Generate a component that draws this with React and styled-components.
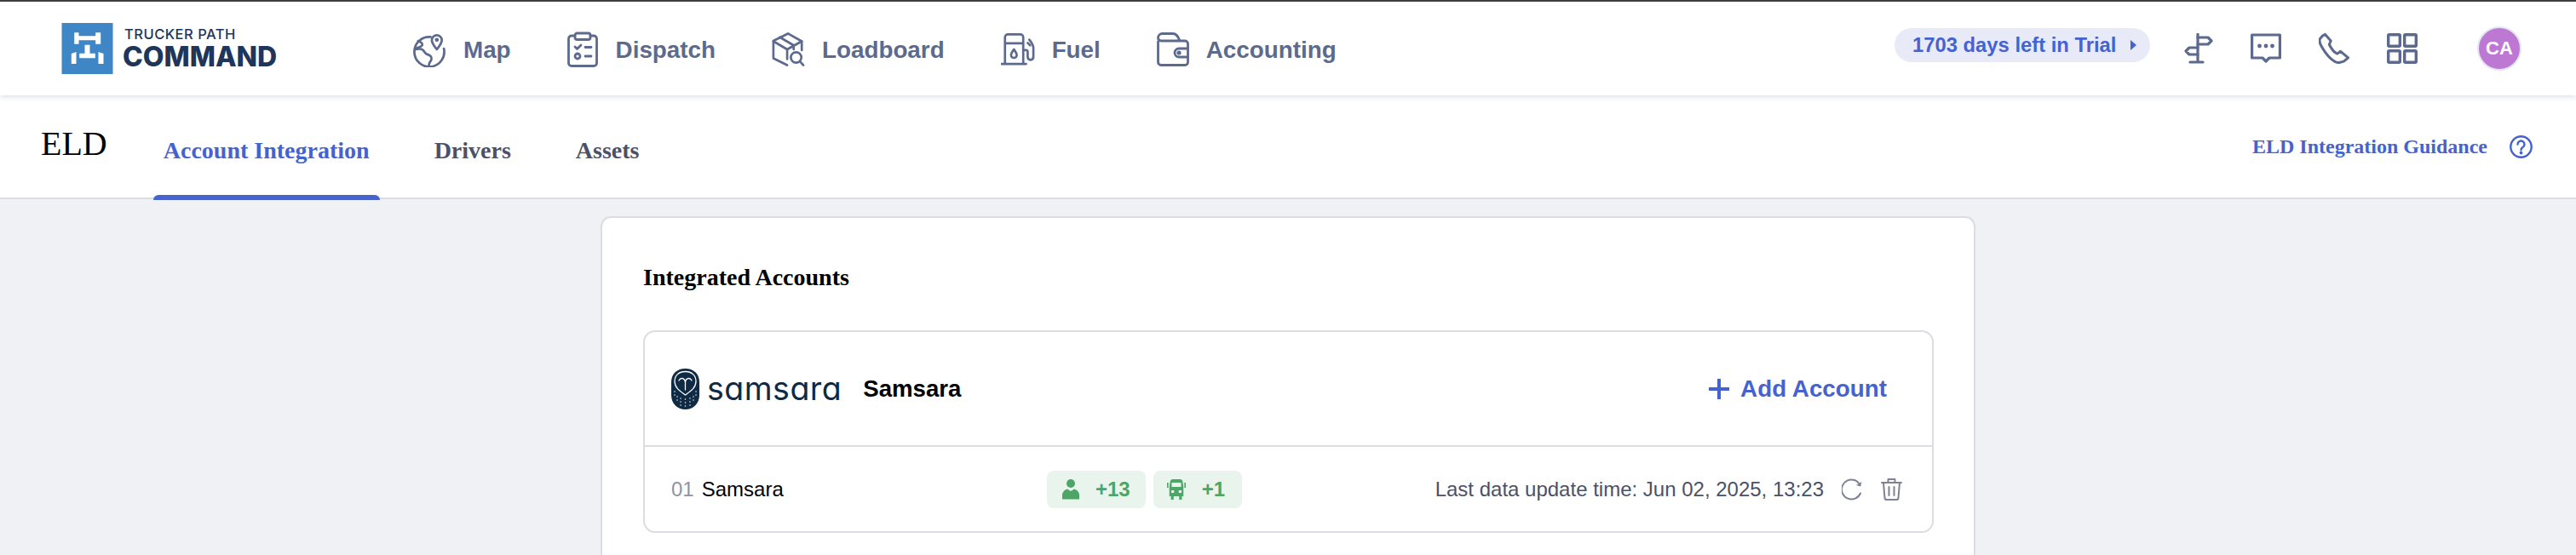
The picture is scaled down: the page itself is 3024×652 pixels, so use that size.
import React from "react";
import styled, { createGlobalStyle } from "styled-components";

const GlobalStyle = createGlobalStyle`
  html, body {
    margin: 0;
    padding: 0;
    background: #f0f1f5;
    font-family: "Liberation Sans", Arial, sans-serif;
  }
`;

const slate = "#5c6a8e";
const blue = "#4563d0";

const LogoMark = () => (
  <svg width="61" height="60" viewBox="0 0 60 60">
    <rect width="60" height="60" fill="#3f86c6" />
    <path
      fill="#fff"
      d="M14.7 11.3H20V15.3H39.7V11.3H45.7V24.7H39.7V20.3H20V24.7H14.7ZM27 25.7H33V35.7H39.3V41.3H20.7V35.7H27ZM11.3 36L17 34V48H11.3ZM43 34L49 36V48H43Z"
    />
  </svg>
);

const MapIcon = () => (
  <svg width="40" height="42" viewBox="0 0 40 42" fill="none" stroke={slate} strokeWidth="2.8" strokeLinecap="round" strokeLinejoin="round">
    <path d="M21 6A18 18 0 1 0 37 20" />
    <path d="M3 21c4-1 7-1 9 1s2 4 5 5 6 3 5 6-3 4-3 7" />
    <path d="M6 11c3 1 6 3 5 5s-4 2-8 4" />
    <path d="M28.5 21c-3-4-6-7-6-11a6 6 0 0 1 12 0c0 4-3 7-6 11Z" />
    <circle cx="28.5" cy="9.5" r="1" fill={slate} />
  </svg>
);

const DispatchIcon = () => (
  <svg width="36" height="42" viewBox="0 0 36 42" fill="none" stroke={slate} strokeWidth="2.8" strokeLinecap="round" strokeLinejoin="round">
    <path d="M9 5H5a3.5 3.5 0 0 0-3.5 3.5V37A3.5 3.5 0 0 0 5 40.500H31a3.500 3.500 0 0 0 3.500-3.500V8.500A3.500 3.500 0 0 0 31 5H27" />
    <rect x="9" y="2" width="18" height="7.500" rx="2.500" />
    <path d="M9 18l2.500 2.500L16 16M21 18.500H28M21 29H28" />
    <circle cx="12" cy="29" r="3" />
  </svg>
);

const LoadboardIcon = () => (
  <svg width="41" height="42" viewBox="0 0 41 42" fill="none" stroke={slate} strokeWidth="2.8" strokeLinecap="round" strokeLinejoin="round">
    <path d="M37 22V11L20 1.500 2 10.500V32L19 40.500" />
    <path d="M2 11l17 10M19 21V33M19 21L37 11M10 6L27 16V21" />
    <circle cx="30" cy="31" r="6.500" />
    <path d="M35 36l4 4.500" />
  </svg>
);

const FuelIcon = () => (
  <svg width="42" height="40" viewBox="0 0 42 40" fill="none" stroke={slate} strokeWidth="2.8" strokeLinecap="round" strokeLinejoin="round">
    <path d="M5 37V5a3.500 3.500 0 0 1 3.500-3.500H24A3.500 3.500 0 0 1 27.500 5V37M1 38H31M5 12.500H27.500" />
    <path d="M16 20c-2 3-3.500 5-3.500 7a3.500 3.500 0 0 0 7 0c0-2-1.500-4-3.500-7Z" />
    <path d="M27.500 21H31c1.500 0 2 1 2 2.500V29c0 2 1 4 3.500 4s3.500-2 3.500-4V18c0-3-1-5-5-10" />
    <path d="M33 12l3 3" />
  </svg>
);

const WalletIcon = () => (
  <svg width="38" height="40" viewBox="0 0 38 40" fill="none" stroke={slate} strokeWidth="2.8" strokeLinecap="round" strokeLinejoin="round">
    <path d="M1.500 11V35a3.500 3.500 0 0 0 3.500 3.500H33a3.500 3.500 0 0 0 3.500-3.500V13.500A3.500 3.500 0 0 0 33 10H5A3.500 3.500 0 0 1 1.500 6.500 5 5 0 0 1 6 1.500H19c4 0 6 3 8 8.500" />
    <path d="M36 19H26a5 5 0 0 0 0 10H36" />
    <circle cx="26" cy="24" r="1.200" fill={slate} />
  </svg>
);

const SignIcon = () => (
  <svg width="36" height="36" viewBox="0 0 36 36" fill="none" stroke={slate} strokeWidth="3.2" strokeLinecap="round" strokeLinejoin="round">
    <path d="M18 1V33M9 34H24" />
    <path d="M18 5H30L34 9 30 13H18" />
    <path d="M18 17H8L4 21 8 25H18" />
  </svg>
);

const ChatIcon = () => (
  <svg width="36" height="36" viewBox="0 0 36 36" fill="none" stroke={slate} strokeWidth="3.2" strokeLinejoin="round">
    <path d="M1.600 2H34.400V29H22L18 33 14 29H1.600Z" />
    <circle cx="10.500" cy="15" r="2.400" fill={slate} stroke="none" />
    <circle cx="18" cy="15" r="2.400" fill={slate} stroke="none" />
    <circle cx="25.500" cy="15" r="2.400" fill={slate} stroke="none" />
  </svg>
);

const PhoneIcon = () => (
  <svg width="38" height="38" viewBox="0 0 38 38" fill="none" stroke={slate} strokeWidth="3.2" strokeLinecap="round" strokeLinejoin="round">
    <path d="M5 3 1.800 6.500C0.500 8 1 12 3 15.500 6 21 10 27 15 31.500 19 35 22 37 25.500 36.500L31 35 36.500 30.500 27 22.500 23 25.500C20 24.500 15.500 19 13 14L15 9.500 8 1.500Z" />
  </svg>
);

const GridIcon = () => (
  <svg width="36" height="36" viewBox="0 0 36 36" fill="none" stroke={slate} strokeWidth="3.400">
    <rect x="1.700" y="1.700" width="13.600" height="13.600" rx="1" />
    <rect x="20.700" y="1.700" width="13.600" height="13.600" rx="1" />
    <rect x="1.700" y="20.700" width="13.600" height="13.600" rx="1" />
    <rect x="20.700" y="20.700" width="13.600" height="13.600" rx="1" />
  </svg>
);

const HelpIcon = () => (
  <svg width="27" height="27" viewBox="0 0 27 27" fill="none" stroke={blue} strokeWidth="2.400" strokeLinecap="round">
    <circle cx="13.500" cy="13.500" r="12.200" />
    <path d="M9.500 10.500a4 4 0 1 1 6 3.500c-1.300.8-2 1.500-2 3" />
    <circle cx="13.500" cy="20.500" r=".7" fill={blue} />
  </svg>
);

const OwlLogo = () => (
  <svg width="33" height="48" viewBox="0 0 33 48">
    <path fill="#0f2a44" d="M16.500 0C26 0 33 6 33 16V31C33 41 26 48 16.500 48S0 41 0 31V16C0 6 7 0 16.500 0Z" />
    <path fill="none" stroke="#fff" strokeWidth="1.300" d="M16.500 3.500C24 3.500 29 8 29 15 29 23 22 27 16.500 31 11 27 4 23 4 15 4 8 9 3.500 16.500 3.500Z" />
    <path fill="none" stroke="#fff" strokeWidth="1.300" strokeLinecap="round" d="M9 14c2-4 7-3 7.500 2l0 9M24 14c-2-4-7-3-7.500 2" />
    <g fill="#fff">
      {[
        [4, 27], [4, 31], [7, 33], [7, 37], [11, 35], [11, 39], [11, 43],
        [16.5, 36], [16.5, 40], [16.5, 44], [22, 35], [22, 39], [22, 43],
        [26, 33], [26, 37], [29, 27], [29, 31],
      ].map(([cx, cy]) => (
        <circle key={`${cx}-${cy}`} cx={cx} cy={cy} r=".75" />
      ))}
    </g>
  </svg>
);

const PersonIcon = () => (
  <svg width="20" height="24" viewBox="0 0 20 24" fill="#4da568">
    <circle cx="10" cy="5" r="5" />
    <path d="M6 11.500 10 14l4-2.500c3 .5 5 3 6 6V23.500H0V17.500c1-3 3-5.500 6-6Z" />
  </svg>
);

const TruckIcon = () => (
  <svg width="22" height="24" viewBox="0 0 24 24" fill="#4da568" preserveAspectRatio="none">
    <path d="M7 0H17c1.500 0 2.500 1 3 2.500L21 9V20H19v4H15.500v-4H8.500v4H5v-4H3V9L4 2.500C4.500 1 5.500 0 7 0Z" />
    <rect x="6" y="4" width="12" height="5" fill="#e9f5ec" />
    <rect x="5.500" y="13" width="3.500" height="3" fill="#e9f5ec" />
    <rect x="15" y="13" width="3.500" height="3" fill="#e9f5ec" />
    <rect x="0" y="4" width="1.800" height="6" />
    <rect x="22.200" y="4" width="1.800" height="6" />
  </svg>
);

const RefreshIcon = () => (
  <svg width="25" height="26" viewBox="0 0 25 26" fill="none" stroke="#7d8295" strokeWidth="2" strokeLinecap="round">
    <path d="M22 17.500A11.500 11.500 0 1 1 15 2C18 3 20 5 21.500 8" />
    <path d="M23.500 4 22 9.500 17 8" fill="#7d8295" stroke="none" />
  </svg>
);

const TrashIcon = () => (
  <svg width="25" height="27" viewBox="0 0 25 27" fill="none" stroke="#7d8295" strokeWidth="2" strokeLinecap="round" strokeLinejoin="round">
    <path d="M1 6H24M8.500 6V2H16.500V6" />
    <path d="M3 6 4.500 24c.2 1.200 1 2 2 2H18.500c1 0 1.800-.8 2-2L22 6" />
    <path d="M9.500 11V21M15.500 11V21" />
  </svg>
);

const navItems = [
  { label: "Map", Icon: MapIcon, slot: 39 },
  { label: "Dispatch", Icon: DispatchIcon, slot: 37 },
  { label: "Loadboard", Icon: LoadboardIcon, slot: 39 },
  { label: "Fuel", Icon: FuelIcon, slot: 40 },
  { label: "Accounting", Icon: WalletIcon, slot: 38 },
];

const App = () => {
  return (
    <Page>
      <GlobalStyle />
      <Header>
        <Logo>
          <LogoMark />
          <LogoText>
            <LogoSmall>TRUCKER PATH</LogoSmall>
            <LogoBig>COMMAND</LogoBig>
          </LogoText>
        </Logo>
        <Nav>
          {navItems.map(({ label, Icon, slot }) => (
            <NavItem key={label}>
              <NavIcon $width={slot}>
                <Icon />
              </NavIcon>
              <NavLabel>{label}</NavLabel>
            </NavItem>
          ))}
        </Nav>
        <HeaderRight>
          <TrialPill>
            1703 days left in Trial
            <Caret />
          </TrialPill>
          <HeaderIcons>
            <IconSlot><SignIcon /></IconSlot>
            <IconSlot><ChatIcon /></IconSlot>
            <IconSlot><PhoneIcon /></IconSlot>
            <IconSlot><GridIcon /></IconSlot>
          </HeaderIcons>
          <Avatar>CA</Avatar>
        </HeaderRight>
      </Header>

      <SubHeader>
        <PageTitle>ELD</PageTitle>
        <Tabs>
          <Tab $active>Account Integration</Tab>
          <Tab>Drivers</Tab>
          <Tab>Assets</Tab>
        </Tabs>
        <Guidance>
          ELD Integration Guidance
          <HelpIcon />
        </Guidance>
      </SubHeader>

      <Main>
        <Card>
          <CardTitle>Integrated Accounts</CardTitle>
          <Provider>
            <ProviderHead>
              <OwlLogo />
              <Wordmark>samsara</Wordmark>
              <ProviderName>Samsara</ProviderName>
              <AddAccount>
                <Plus />
                Add Account
              </AddAccount>
            </ProviderHead>
            <AccountRow>
              <AccountName>
                <Index>01</Index>
                Samsara
              </AccountName>
              <Badges>
                <Badge>
                  <PersonIcon />
                  +13
                </Badge>
                <Badge $tight>
                  <TruckIcon />
                  +1
                </Badge>
              </Badges>
              <RowRight>
                <UpdateTime>Last data update time: Jun 02, 2025, 13:23</UpdateTime>
                <RefreshIcon />
                <TrashIcon />
              </RowRight>
            </AccountRow>
          </Provider>
        </Card>
      </Main>
    </Page>
  );
};

const Page = styled.div`
  display: flex;
  flex-direction: column;
  height: 652px;
  overflow: hidden;
  background: #f0f1f5;
`;

const Header = styled.header`
  position: relative;
  z-index: 2;
  display: flex;
  align-items: center;
  flex: none;
  box-sizing: border-box;
  height: 112px;
  padding: 0 64px 0 72px;
  border-top: 2px solid #3f3f3f;
  background: #fff;
  box-shadow: 0 2px 6px rgba(40, 60, 90, 0.16);
`;

const Logo = styled.div`
  display: flex;
  align-items: center;
  gap: 11px;
  width: 413px;
`;

const LogoText = styled.div`
  display: flex;
  flex-direction: column;
  margin-top: -3px;
  color: #20355a;
  font-family: "Inter", sans-serif;
`;

const LogoSmall = styled.span`
  margin-left: 2px;
  font-size: 16.5px;
  font-weight: 500;
  letter-spacing: 0.5px;
  line-height: 22px;
  white-space: nowrap;
`;

const LogoBig = styled.span`
  font-size: 32px;
  font-weight: 800;
  line-height: 31px;
`;

const Nav = styled.nav`
  display: flex;
  align-items: center;
  gap: 66px;
  margin-top: 1px;
`;

const NavItem = styled.div`
  display: flex;
  align-items: center;
  gap: 20px;
  color: ${slate};
  font-size: 27.8px;
  font-weight: 700;
  white-space: nowrap;
`;

const NavIcon = styled.div`
  display: flex;
  flex: none;
  width: ${(p) => p.$width}px;
`;

const NavLabel = styled.span`
  margin-top: 2px;
`;

const HeaderRight = styled.div`
  display: flex;
  align-items: center;
  margin-left: auto;
`;

const TrialPill = styled.div`
  display: flex;
  align-items: center;
  box-sizing: border-box;
  width: 300px;
  height: 40px;
  margin-top: -8px;
  padding-left: 21px;
  border-radius: 20px;
  background: #e8eaf8;
  color: ${blue};
  font-size: 23.8px;
  font-weight: 700;
  white-space: nowrap;
`;

const Caret = styled.i`
  width: 0;
  height: 0;
  margin-left: 17px;
  border-top: 6px solid transparent;
  border-bottom: 6px solid transparent;
  border-left: 7px solid ${blue};
`;

const HeaderIcons = styled.div`
  display: flex;
  align-items: center;
  gap: 44px;
  margin-left: 38px;
`;

const IconSlot = styled.div`
  display: flex;
  justify-content: center;
  width: 36px;
`;

const Avatar = styled.div`
  display: flex;
  align-items: center;
  justify-content: center;
  box-sizing: border-box;
  width: 52px;
  height: 52px;
  margin-left: 70px;
  border: 2px solid #e3e6f0;
  border-radius: 50%;
  background: #bd78d3;
  color: #fff;
  font-size: 22px;
  font-weight: 700;
`;

const SubHeader = styled.div`
  display: flex;
  align-items: center;
  flex: none;
  box-sizing: border-box;
  height: 122px;
  padding: 0 51px 0 48px;
  border-bottom: 2px solid #dcdde3;
  background: #fff;
  font-family: "Liberation Serif", "Times New Roman", serif;
`;

const PageTitle = styled.div`
  padding-bottom: 6px;
  color: #000;
  font-size: 40px;
  line-height: 46px;
`;

const Tabs = styled.div`
  display: flex;
  align-self: stretch;
  gap: 52px;
  margin-left: 54px;
`;

const Tab = styled.div`
  position: relative;
  display: flex;
  align-items: center;
  padding: 10px 12px 0;
  color: ${(p) => (p.$active ? blue : "#4b5168")};
  font-size: 28px;
  font-weight: 700;
  white-space: nowrap;

  &::after {
    content: "";
    display: ${(p) => (p.$active ? "block" : "none")};
    position: absolute;
    left: 0;
    right: 0;
    bottom: -3px;
    height: 6px;
    border-radius: 6px 6px 0 0;
    background: #4763cc;
  }
`;

const Guidance = styled.div`
  display: flex;
  align-items: center;
  gap: 26px;
  margin-left: auto;
  color: ${blue};
  font-size: 24px;
  font-weight: 700;
  white-space: nowrap;
`;

const Main = styled.main`
  display: flex;
  justify-content: center;
  flex: 1;
  padding-top: 20px;
`;

const Card = styled.section`
  box-sizing: border-box;
  width: 1614px;
  height: 500px;
  padding: 0 47px 0 48px;
  border: 2px solid #dcdde3;
  border-radius: 12px;
  background: #fff;
`;

const CardTitle = styled.h2`
  box-sizing: border-box;
  height: 78px;
  margin: 0 0 54px;
  padding: 54px 0 0;
  color: #000;
  font-family: "Liberation Serif", "Times New Roman", serif;
  font-size: 28px;
  font-weight: 700;
  line-height: 32px;
`;

const Provider = styled.div`
  border: 2px solid #dcdde3;
  border-radius: 14px;
`;

const ProviderHead = styled.div`
  display: flex;
  align-items: center;
  height: 133px;
  padding: 0 53px 0 31px;
  border-bottom: 2px solid #dcdde3;
`;

const Wordmark = styled.span`
  margin-left: 9px;
  color: #0f2a44;
  font-family: "Inter", sans-serif;
  font-feature-settings: "cv11";
  font-size: 37.5px;
  font-weight: 400;
  letter-spacing: 0.5px;
  line-height: 1;
`;

const ProviderName = styled.span`
  margin-left: 25px;
  color: #000;
  font-size: 27.6px;
  font-weight: 700;
`;

const AddAccount = styled.div`
  display: flex;
  align-items: center;
  gap: 13px;
  margin-left: auto;
  color: ${blue};
  font-size: 27.8px;
  font-weight: 700;
  white-space: nowrap;
`;

const Plus = styled.i`
  width: 24px;
  height: 24px;
  background:
    linear-gradient(${blue}, ${blue}) center / 100% 4px no-repeat,
    linear-gradient(${blue}, ${blue}) center / 4px 100% no-repeat;
`;

const AccountRow = styled.div`
  display: flex;
  align-items: center;
  height: 99px;
  padding: 0 35px 0 31px;
`;

const AccountName = styled.div`
  display: flex;
  gap: 9px;
  width: 441px;
  color: #000;
  font-size: 24px;
`;

const Index = styled.span`
  color: #8f93a6;
`;

const Badges = styled.div`
  display: flex;
  gap: 9px;
`;

const Badge = styled.div`
  display: flex;
  align-items: center;
  gap: 19px;
  height: 44px;
  padding: 0 ${(p) => (p.$tight ? 20 : 18)}px 0 ${(p) => (p.$tight ? 16 : 18)}px;
  border-radius: 8px;
  background: #e9f5ec;
  color: #4da568;
  font-size: 24px;
  font-weight: 700;
`;

const RowRight = styled.div`
  display: flex;
  align-items: center;
  gap: 21px;
  margin-left: auto;
`;

const UpdateTime = styled.span`
  color: #4b5168;
  font-size: 24px;
  white-space: nowrap;
`;

export default App;
